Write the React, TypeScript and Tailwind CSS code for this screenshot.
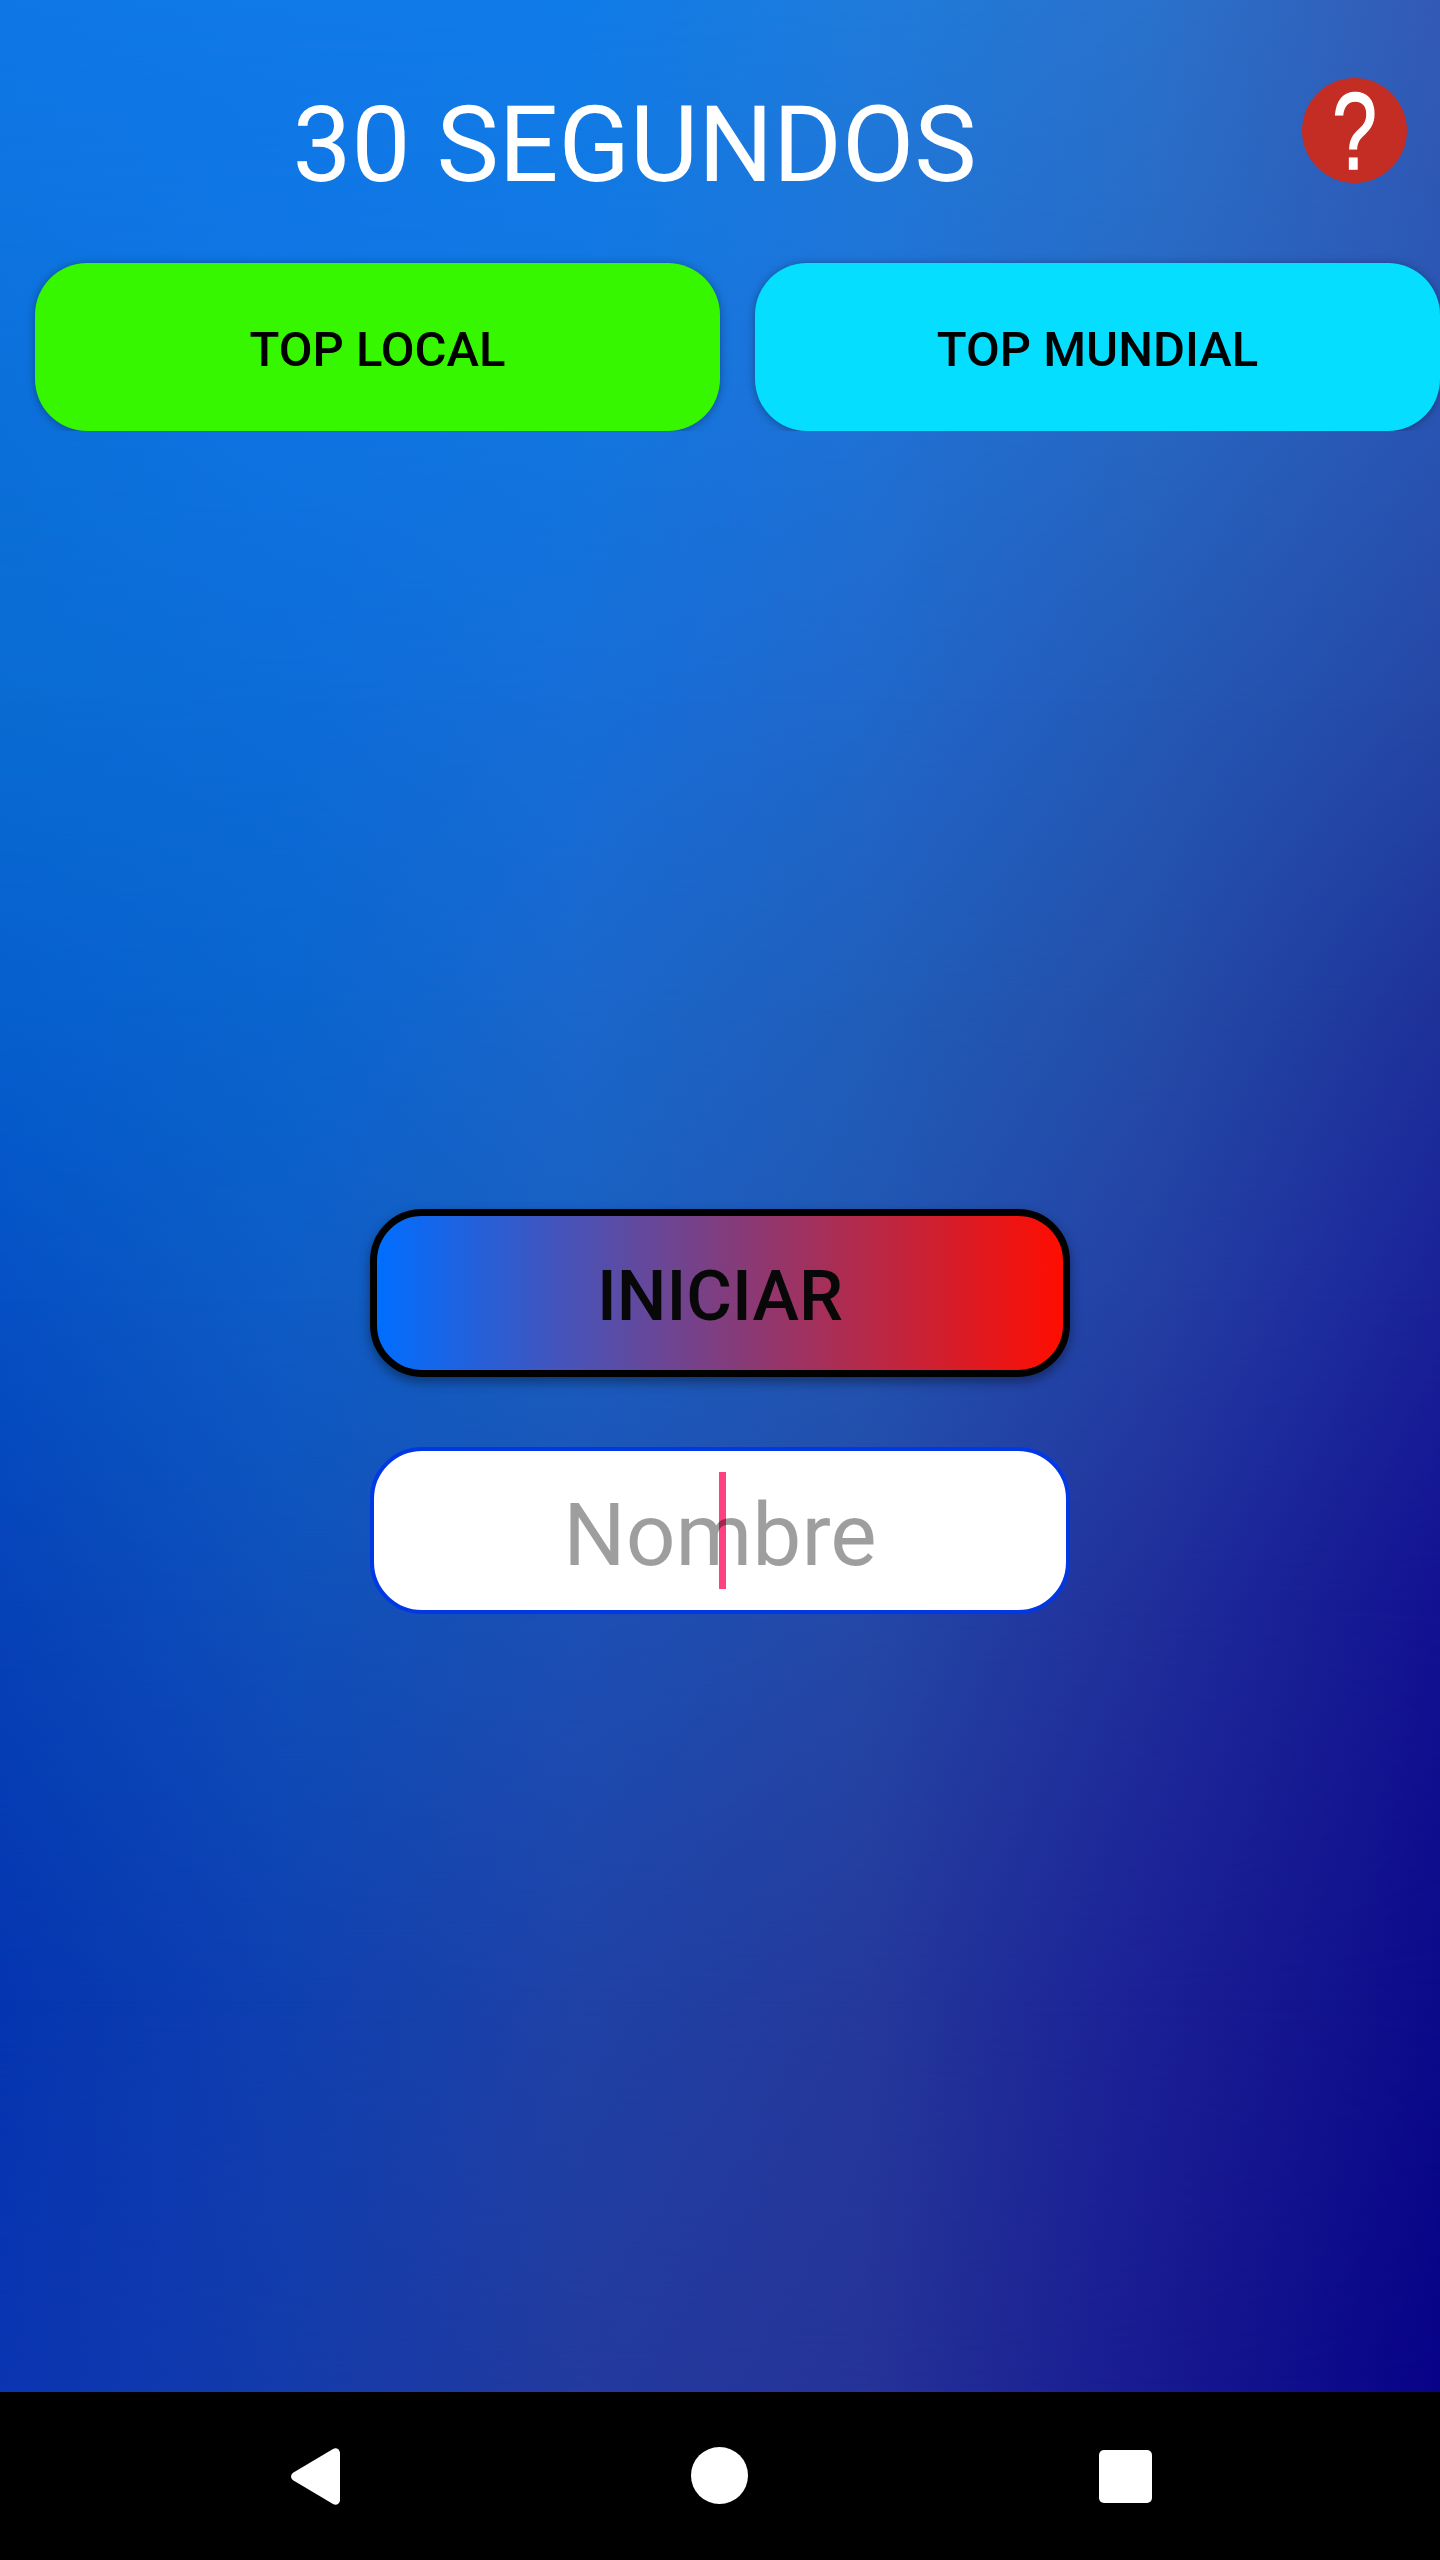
// Horizontal colour stops for each height of the wallpaper, blended row to row.
const wallpaperRows = [
  { y: 0, colors: ["#0f78e6", "#107ae8", "#107ce8", "#1f7bdb", "#2a72cc", "#335ab5"] },
  { y: 400, colors: ["#0c70da", "#0f74e2", "#1276e0", "#1f72d6", "#2767c2", "#2a55b4"] },
  { y: 700, colors: ["#0a6bd3", "#0d6cd8", "#166ed8", "#2068cc", "#2459b6", "#2547a6"] },
  { y: 1000, colors: ["#0660ce", "#0a65cf", "#1a67cc", "#205eba", "#244da9", "#1e329a"] },
  { y: 1300, colors: ["#0550c4", "#0e5cc5", "#195fc0", "#2255b2", "#243fa4", "#1a2198"] },
  { y: 1600, colors: ["#0642b8", "#0f50ba", "#1c50b5", "#2449a8", "#202e9a", "#121292"] },
  { y: 2000, colors: ["#0535b0", "#0f40b0", "#1f42a6", "#25399c", "#1b2095", "#0c0b8a"] },
  { y: 2392, colors: ["#0a35b2", "#143baa", "#233a9e", "#263398", "#171a90", "#080287"] },
];

function Wallpaper() {
  return (
    <svg className="absolute inset-0 h-full w-full" viewBox="0 0 1440 2392" preserveAspectRatio="none" aria-hidden="true">
      <defs>
        {wallpaperRows.map((row, i) => (
          <linearGradient key={row.y} id={`row-${i}`}>
            {row.colors.map((color, j) => (
              <stop key={j} offset={j / 5} stopColor={color} />
            ))}
          </linearGradient>
        ))}
        {wallpaperRows.slice(1).map((row, i) => (
          <g key={row.y}>
            <linearGradient id={`fade-${i + 1}`} gradientUnits="userSpaceOnUse" x1="0" y1={wallpaperRows[i].y} x2="0" y2={row.y}>
              <stop offset="0" stopColor="#fff" stopOpacity="0" />
              <stop offset="1" stopColor="#fff" />
            </linearGradient>
            <mask id={`mask-${i + 1}`} maskUnits="userSpaceOnUse" x="0" y="0" width="1440" height="2392">
              <rect width="1440" height="2392" fill={`url(#fade-${i + 1})`} />
            </mask>
          </g>
        ))}
      </defs>
      {wallpaperRows.map((row, i) => (
        <rect key={row.y} width="1440" height="2392" fill={`url(#row-${i})`} mask={i > 0 ? `url(#mask-${i})` : undefined} />
      ))}
    </svg>
  );
}

function NavBar() {
  return (
    <nav className="flex h-[168px] items-center bg-black text-white">
      <button aria-label="Atrás" className="ml-[291px]">
        <svg width="49" height="57" viewBox="0 0 49 57" fill="currentColor" className="mt-px">
          <path d="M2.5 24.5 42 .9Q45-.6 47.500 1.500 49 3 49 5V52Q49 54 47.500 55.500 45 57.600 42 56.100L2.500 32.500Q0 30.800 0 28.500 0 26.200 2.500 24.500Z" />
        </svg>
      </button>
      <button aria-label="Inicio" className="mb-px ml-[351px] h-[57px] w-[57px] rounded-full bg-white" />
      <button aria-label="Recientes" className="ml-[351px] h-[53px] w-[53px] rounded-[5px] bg-white" />
    </nav>
  );
}

export default function App() {
  return (
    <div className="flex h-[2560px] w-[1440px] flex-col overflow-hidden font-['Roboto',sans-serif]">
      <main className="relative flex-1 overflow-hidden">
        <Wallpaper />
        <div className="relative flex flex-col">
          <header className="flex h-[243px] items-start pt-[78px] pr-[33px]">
            <h1 className="flex-1 pt-[2px] pr-[33px] text-center text-[105px] leading-[132px] font-normal text-white">30 SEGUNDOS</h1>
            <button
              aria-label="Ayuda"
              className="flex h-[105px] w-[105px] items-center justify-center rounded-full bg-[#c42d23] font-['Liberation_Sans',sans-serif] text-[110px] leading-[105px] text-white"
            >
              <span className="block scale-x-[0.73] [-webkit-text-stroke:1.5px_white]">?</span>
            </button>
          </header>

          <div className="flex gap-[35px] overflow-hidden pt-[20px] pl-[35px] text-[49px] font-medium text-black">
            <button className="h-[168px] flex-1 rounded-[52px] bg-[#36f600] pt-[5px] shadow-[0_1px_8px_rgba(0,0,0,0.35)]">TOP LOCAL</button>
            <button className="h-[168px] flex-1 rounded-[52px] bg-[#05deff] pt-[5px] shadow-[0_1px_8px_rgba(0,0,0,0.35)]">TOP MUNDIAL</button>
          </div>

          <div className="mt-[778px] flex flex-col items-center gap-[70px]">
            <button className="h-[168px] w-[700px] rounded-[52px] border-[7px] border-black bg-linear-to-r/srgb from-[#006eff] to-[#ff0d00] bg-origin-padding pt-[6px] text-[70px] font-medium text-[#080808] shadow-[0_5px_12px_rgba(0,0,0,0.4)]">
              INICIAR
            </button>
            <div className="relative flex h-[167px] w-[700px] items-center justify-center rounded-[52px] border-4 border-[#0038e6] bg-white">
              <span className="absolute top-[21px] left-[345px] h-[117px] w-[7px] bg-[#ff4081]" />
              <span className="relative pt-[10px] text-[87.5px] leading-none text-black/38">Nombre</span>
            </div>
          </div>
        </div>
      </main>
      <NavBar />
    </div>
  );
}
